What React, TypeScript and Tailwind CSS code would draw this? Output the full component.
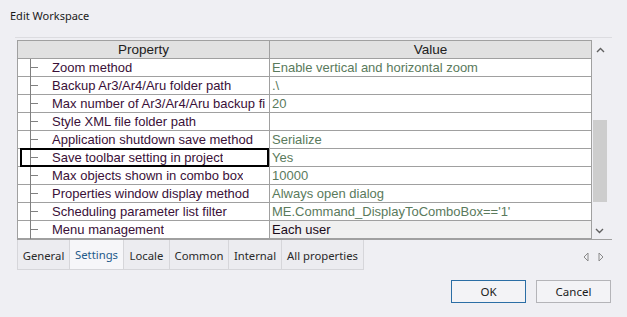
import React from "react";

const rows: { p: string; v: string; sel?: boolean; gray?: boolean }[] = [
  { p: "Zoom method", v: "Enable vertical and horizontal zoom" },
  { p: "Backup Ar3/Ar4/Aru folder path", v: ".\\" },
  { p: "Max number of Ar3/Ar4/Aru backup fi", v: "20" },
  { p: "Style XML file folder path", v: "" },
  { p: "Application shutdown save method", v: "Serialize" },
  { p: "Save toolbar setting in project", v: "Yes", sel: true },
  { p: "Max objects shown in combo box", v: "10000" },
  { p: "Properties window display method", v: "Always open dialog" },
  { p: "Scheduling parameter list filter", v: "ME.Command_DisplayToComboBox=='1'" },
  { p: "Menu management", v: "Each user", gray: true },
];

const tabs = [
  { t: "General", w: 52 },
  { t: "Settings", w: 54, active: true },
  { t: "Locale", w: 46 },
  { t: "Common", w: 59 },
  { t: "Internal", w: 53 },
  { t: "All properties", w: 82 },
];

const ui = { fontFamily: "'Noto Sans', 'Open Sans', sans-serif" };

export default function App() {
  return (
    <div
      className="w-[627px] h-[317px] bg-[#efeff3] overflow-hidden flex flex-col"
      style={{ fontFamily: "'Liberation Sans', Arial, sans-serif" }}
    >
      <div className="pl-[10px] pt-[8px] h-[37px] text-[11px] text-[#1a1a1a]" style={ui}>
        Edit Workspace
      </div>
      <div className="ml-[15px] w-[597px] border-t border-[#dcdce0] pt-[2px] pl-[2px]">
        <div className="flex w-[591px] border-l border-[#a0a0a0]">
          <div className="w-[575px] border-r border-t border-[#a0a0a0] bg-white">
            <div className="flex h-[18px] bg-[#e1e1e1] border-b border-[#a0a0a0] text-[13.5px] text-[#202020] leading-[17px]">
              <div className="w-[252px] border-r border-[#a0a0a0] text-center">Property</div>
              <div className="flex-1 text-center">Value</div>
            </div>
            {rows.map((r, i) => (
              <div key={i} className="flex h-[18px] border-b border-[#a0a0a0] text-[13px] leading-[17px] bg-white">
                <div className="w-[252px] border-r border-[#a0a0a0] relative flex">
                  <div className="w-[12px] relative">
                    <div className="absolute left-[12px] top-0 bottom-[-1px] w-px bg-[#808080]" />
                    <div className="absolute left-[12px] top-[8px] w-[8px] h-px bg-[#808080]" />
                  </div>
                  <div className="pl-[22px] text-[#3a1038] whitespace-nowrap overflow-hidden">{r.p}</div>
                  {r.sel && (
                    <div className="absolute left-[2px] right-[0px] top-[-1px] bottom-[-1px] border-2 border-black" />
                  )}
                </div>
                <div
                  className={`flex-1 pl-[2px] whitespace-nowrap overflow-hidden ${
                    r.gray ? "bg-[#f0f0f0] text-[#1a0a18]" : "text-[#5a7a5c]"
                  }`}
                >
                  {r.v}
                </div>
              </div>
            ))}
          </div>
          <div className="w-[16px] flex flex-col items-center relative">
            <svg width="9" height="6" viewBox="0 0 9 6" className="mt-[7px]">
              <path d="M1 5 L4.5 1.5 L8 5" fill="none" stroke="#606060" strokeWidth="1.4" />
            </svg>
            <div className="absolute left-[1px] top-[80px] w-[14px] h-[82px] bg-[#cdcdcd]" />
            <svg width="9" height="6" viewBox="0 0 9 6" className="absolute top-[188px] left-[3px]">
              <path d="M1 1 L4.5 4.5 L8 1" fill="none" stroke="#606060" strokeWidth="1.4" />
            </svg>
          </div>
        </div>
        <div className="w-[595px] border-t border-[#a0a0a0] flex items-start">
          <div className="flex h-[30px] border-l border-[#d6d6da]">
            {tabs.map((t) => (
              <div
                key={t.t}
                style={{ width: t.w, ...ui }}
                className={`border-r border-b border-[#d6d6da] text-[11.3px] flex justify-center ${
                  t.active ? "bg-[#f6f6f9] text-[#1f5a8a] pt-[7px]" : "bg-[#ececf0] text-[#2a2a2a] pt-[8px]"
                }`}
              >
                {t.t}
              </div>
            ))}
          </div>
          <div className="flex-1" />
          <div className="flex gap-[9px] mt-[12px] mr-[8px]">
            <svg width="6" height="10" viewBox="0 0 6 10">
              <path d="M5 1 L1 5 L5 9 Z" fill="none" stroke="#8a8a8a" strokeWidth="1" />
            </svg>
            <svg width="6" height="10" viewBox="0 0 6 10">
              <path d="M1 1 L5 5 L1 9 Z" fill="none" stroke="#8a8a8a" strokeWidth="1" />
            </svg>
          </div>
        </div>
      </div>
      <div className="flex justify-end gap-[10px] pr-[16px] mt-[10px]">
        <button
          className="w-[75px] h-[23px] border border-[#2b6ea5] bg-[#f3f3f6] text-[11.5px] text-[#1a1a1a]"
          style={ui}
        >
          OK
        </button>
        <button
          className="w-[75px] h-[23px] border border-[#b4b4b8] bg-[#f3f3f6] text-[11.5px] text-[#1a1a1a]"
          style={ui}
        >
          Cancel
        </button>
      </div>
    </div>
  );
}
